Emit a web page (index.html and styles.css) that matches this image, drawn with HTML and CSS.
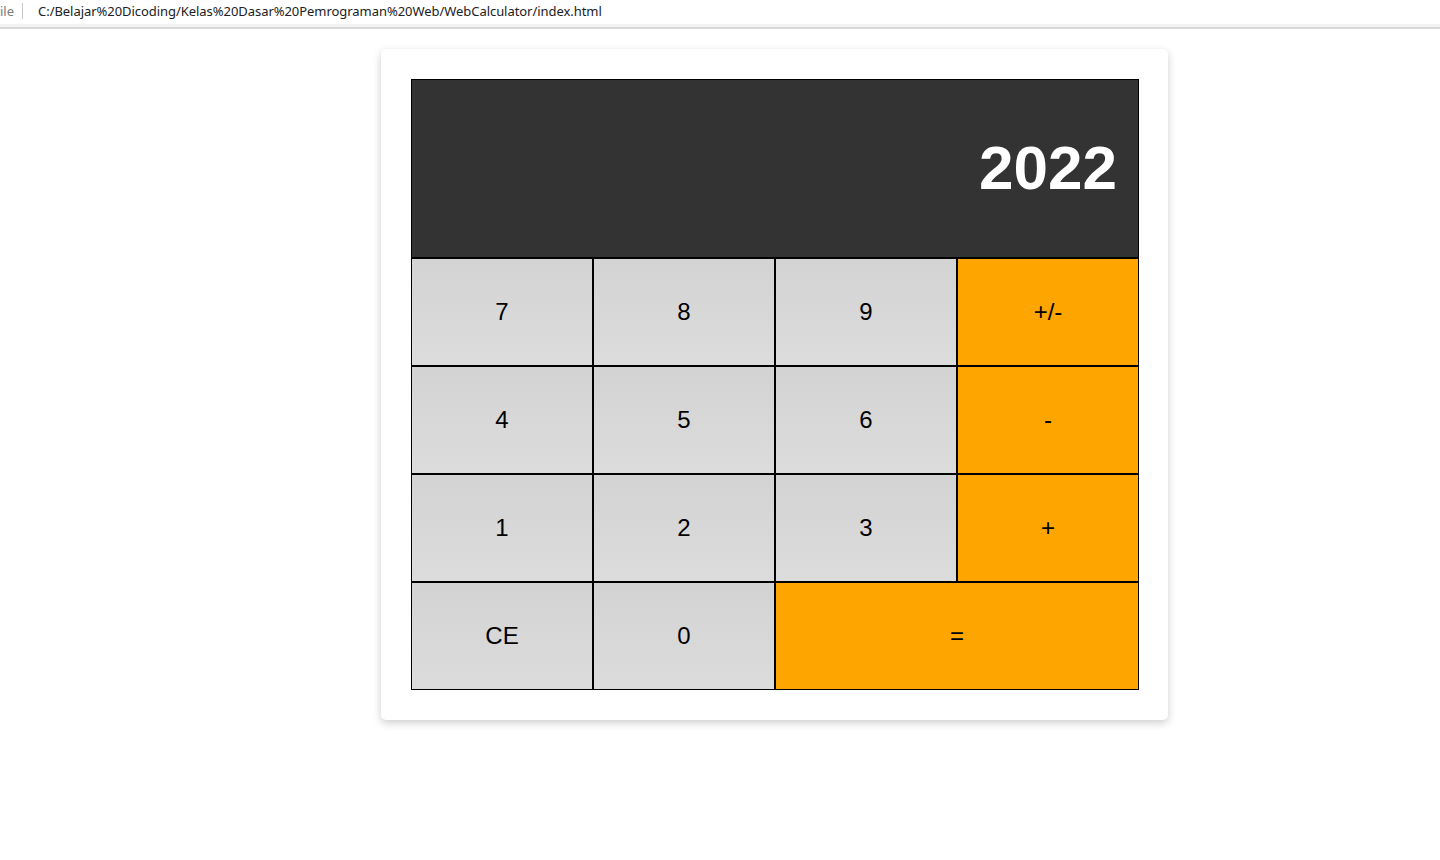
FILE: index.html
```html
<!DOCTYPE html>
<html lang="id">
<head>
<meta charset="utf-8">
<title>Web Calculator</title>
<link rel="stylesheet" href="styles.css">
</head>
<body>
<div class="addressbar">
  <span class="scheme">ile</span>
  <span class="sep"></span>
  <span class="url">C:/Belajar%20Dicoding/Kelas%20Dasar%20Pemrograman%20Web/WebCalculator/index.html</span>
</div>
<main class="page">
  <div class="card">
    <div class="calculator">
      <div class="display">2022</div>
      <button class="key">7</button>
      <button class="key">8</button>
      <button class="key">9</button>
      <button class="key op">+/-</button>
      <button class="key">4</button>
      <button class="key">5</button>
      <button class="key">6</button>
      <button class="key op">-</button>
      <button class="key">1</button>
      <button class="key">2</button>
      <button class="key">3</button>
      <button class="key op">+</button>
      <button class="key">CE</button>
      <button class="key">0</button>
      <button class="key op wide">=</button>
    </div>
  </div>
</main>
</body>
</html>
```
FILE: styles.css
```css
html, body {
  margin: 0;
  padding: 0;
  background: #ffffff;
}
body {
  font-family: "Liberation Sans", Arial, sans-serif;
}
.addressbar {
  height: 21px;
  display: flex;
  align-items: center;
  font-family: "Noto Sans", "Open Sans", sans-serif;
  font-size: 13px;
  color: #202124;
  border-bottom: 3px solid #f3f3f3;
  overflow: hidden;
  white-space: nowrap;
  padding-bottom: 3px;
  box-shadow: 0 2px 0 #d9d9d9;
  margin-bottom: 2px;
}
.scheme {
  color: #7a7a7a;
}
.sep {
  width: 1px;
  height: 16px;
  background: #c8c8c8;
  margin: 0 15px 0 8px;
}
.url {
  letter-spacing: -0.05px;
}
.page {
  padding: 20px 0 60px 381px;
}
.card {
  width: 787px;
  box-sizing: border-box;
  padding: 30px 29px 30px 30px;
  background: #fff;
  border-radius: 5px;
  box-shadow: 0 3px 9px rgba(0, 0, 0, 0.2);
}
.calculator {
  display: grid;
  grid-template-columns: repeat(4, 182px);
  grid-template-rows: 179px repeat(4, 108px);
}
.display {
  grid-column: 1 / 5;
  background: #333333;
  border: 1px solid #000;
  color: #fff;
  font-weight: bold;
  font-size: 62px;
  display: flex;
  align-items: center;
  justify-content: flex-end;
  padding: 0 21px 2px;
  box-sizing: border-box;
}
.key {
  box-sizing: border-box;
  border: 1px solid #000;
  margin: 0;
  padding: 0;
  background: linear-gradient(#d3d3d3, #dcdcdc);
  color: #000;
  font-family: "Liberation Sans", Arial, sans-serif;
  font-size: 24px;
}
.key.op {
  background: #ffa500;
}
.key.wide {
  grid-column: span 2;
}
```
